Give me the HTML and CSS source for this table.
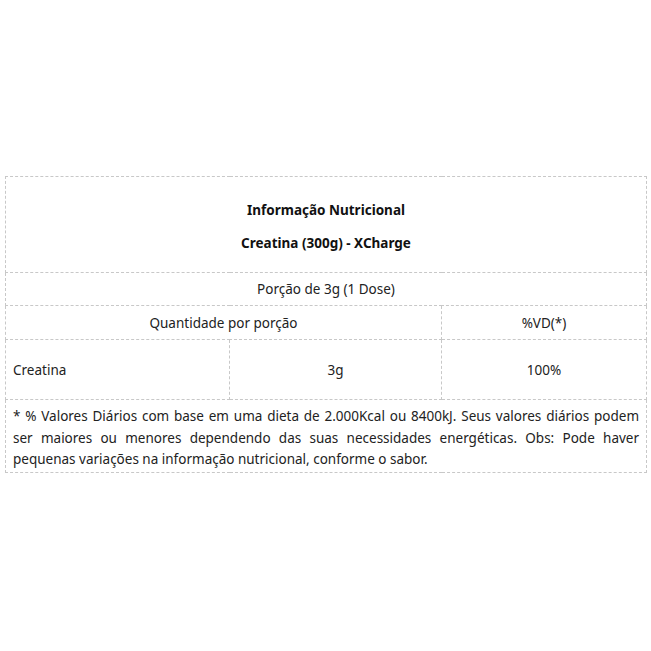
FILE: index.html
```html
<!DOCTYPE html>
<html lang="pt-BR">
<head>
<meta charset="utf-8">
<title>Informação Nutricional</title>
<link rel="stylesheet" href="styles.css">
</head>
<body>
<div class="page">
  <table class="nutri">
    <colgroup>
      <col class="c1"><col class="c2"><col class="c3">
    </colgroup>
    <tr>
      <td colspan="3" class="head">
        <p class="title">Informação Nutricional</p>
        <p class="title">Creatina (300g) - XCharge</p>
      </td>
    </tr>
    <tr class="r-portion"><td colspan="3" class="center">Porção de 3g (1 Dose)</td></tr>
    <tr class="r-qty"><td colspan="2" class="center">Quantidade por porção</td><td class="center">%VD(*)</td></tr>
    <tr class="r-item"><td class="left">Creatina</td><td class="center">3g</td><td class="center">100%</td></tr>
    <tr>
      <td colspan="3" class="foot">* % Valores Diários com base em uma dieta de 2.000Kcal ou 8400kJ. Seus valores diários podem ser maiores ou menores dependendo das suas necessidades energéticas. Obs: Pode haver pequenas variações na informação nutricional, conforme o sabor.</td>
    </tr>
  </table>
</div>
</body>
</html>
```

FILE: styles.css
```css
html, body {
  margin: 0;
  padding: 0;
  background: #fff;
}
.page {
  padding: 176px 5px 0 5px;
}
.nutri {
  width: 641px;
  border-collapse: collapse;
  table-layout: fixed;
  font-family: "Noto Sans", "Open Sans", sans-serif;
  font-size: 13.5px;
  color: #222;
}
.c1 { width: 224px; }
.c2 { width: 212px; }
.c3 { width: 205px; }
.nutri td {
  border: 1px dashed #c8c8c8;
  padding: 0 7px;
  vertical-align: middle;
}
.head {
  height: 91px;
  text-align: center;
}
.nutri .head {
  padding-top: 4px;
}
.title {
  margin: 0;
  font-weight: bold;
  color: #111;
  line-height: 33px;
}
.r-portion td { height: 32px; }
.r-qty td { height: 33px; }
.r-item td { height: 59px; }
.center { text-align: center; }
.left { text-align: left; }
.nutri .foot {
  text-align: justify;
  line-height: 21.5px;
  padding: 6px 7px 1px 7px;
}
```
